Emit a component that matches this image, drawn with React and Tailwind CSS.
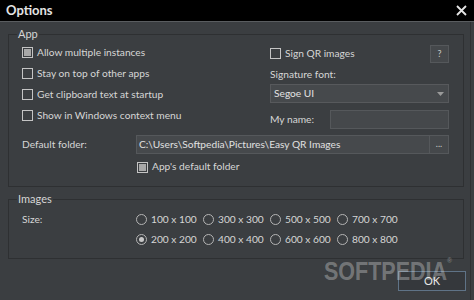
import React from "react";

function Check({ checked, label, className = "" }) {
  return (
    <div className={"flex items-center gap-[4px] whitespace-nowrap " + className}>
      <div className="w-[11px] h-[11px] border border-[#c4c4c4] flex items-center justify-center shrink-0">
        {checked && <div className="w-[7px] h-[7px] bg-[#a8a8a8]" />}
      </div>
      <span>{label}</span>
    </div>
  );
}

function Radio({ checked, label }) {
  return (
    <div className="flex items-center gap-[4px] w-[67px] whitespace-nowrap">
      <div className="w-[11px] h-[11px] rounded-full border border-[#b4b4b4] flex items-center justify-center shrink-0">
        {checked && <div className="w-[5px] h-[5px] rounded-full bg-[#c8c8c8]" />}
      </div>
      <span>{label}</span>
    </div>
  );
}

export default function App() {
  return (
    <div
      className="w-[474px] h-[300px] bg-[#3b3e41] flex flex-col text-[10.2px] text-[#d6d6d6] relative overflow-hidden"
      style={{ fontFamily: 'Lato, "Noto Sans", sans-serif' }}
    >
      <div className="h-[21px] bg-black flex items-center justify-between pl-[6px] pr-[6px] shrink-0">
        <span className="text-[13px] font-bold text-[#e4e4e4] leading-none">Options</span>
        <svg width="11" height="11" viewBox="0 0 11 11" className="mr-[1px]">
          <path d="M1 1 L10 10 M10 1 L1 10" stroke="#e6e6e6" strokeWidth="1.8" />
        </svg>
      </div>
      <div className="h-[1px] bg-[#5a5d60] shrink-0" />
      <div className="flex-1 flex flex-col pl-[8px] pr-[3px] relative">
        <div className="w-[1px] bg-[#2f3133] absolute right-[3px] top-0 bottom-0" />
        <fieldset className="mt-[5px] w-[456px] h-[160px] border border-[#2e3032] pl-[13px] pr-[14px] pt-0 pb-0 flex flex-col">
          <legend className="px-[1px] ml-[-5px] text-[11px] leading-[14px]">App</legend>
          <div className="flex">
            <div className="w-[248px] flex flex-col pt-[1px]">
              <Check checked label="Allow multiple instances" className="h-[21px]" />
              <Check label="Stay on top of other apps" className="h-[21px]" />
              <Check label="Get clipboard text at startup" className="h-[21px]" />
              <Check label="Show in Windows context menu" className="h-[21px]" />
            </div>
            <div className="w-[179px] flex flex-col pt-[3px]">
              <div className="h-[19px] flex items-center justify-between">
                <Check label="Sign QR images" />
                <div className="w-[19px] h-[18px] bg-[#45484b] border border-[#55585b] flex items-center justify-center text-[9px] text-[#c8c8c8]">?</div>
              </div>
              <div className="h-[21px] flex items-center pt-[3px]">Signature font:</div>
              <div className="h-[19px] bg-[#46494c] border border-[#57595c] flex items-center justify-between pl-[3px] pr-[4px]">
                <span className="text-[#e2e2e2]">Segoe UI</span>
                <svg width="7" height="4" viewBox="0 0 7 4">
                  <path d="M0 0 L7 0 L3.5 4 Z" fill="#9a9a9a" />
                </svg>
              </div>
              <div className="h-[19px] mt-[7px] flex items-center">
                <span className="w-[60px] whitespace-nowrap">My name:</span>
                <div className="flex-1 h-[19px] bg-[#45484b] border border-[#55585b]" />
              </div>
            </div>
          </div>
          <div className="flex items-center mt-[6px] h-[19px]">
            <span className="w-[114px]">Default folder:</span>
            <div className="flex-1 h-[19px] bg-[#46494c] border border-[#55585b] flex items-center pl-[2px] text-[#e0e0e0] whitespace-nowrap">
              C:\Users\Softpedia\Pictures\Easy QR Images
            </div>
            <div className="w-[19px] h-[19px] bg-[#45484b] border border-[#55585b] border-l-0 flex items-end justify-center pb-[5px] text-[9px] leading-none text-[#c8c8c8]">...</div>
          </div>
          <Check checked label="App's default folder" className="ml-[115px] mt-[6px] h-[14px]" />
        </fieldset>
        <fieldset className="mt-[5px] w-[456px] h-[67px] border border-[#2e3032] pl-[13px] pr-[14px] pt-0 pb-0 flex flex-col">
          <legend className="px-[1px] ml-[-5px] text-[11px] leading-[14px]">Images</legend>
          <div className="flex pt-[4px]">
            <span className="w-[114px] h-[20px] flex items-center">Size:</span>
            <div className="flex flex-col">
              <div className="flex h-[20px] items-center">
                <Radio label="100 x 100" />
                <Radio label="300 x 300" />
                <Radio label="500 x 500" />
                <Radio label="700 x 700" />
              </div>
              <div className="flex h-[20px] items-center">
                <Radio checked label="200 x 200" />
                <Radio label="400 x 400" />
                <Radio label="600 x 600" />
                <Radio label="800 x 800" />
              </div>
            </div>
          </div>
        </fieldset>
        <div className="flex justify-end mt-[12px] pr-[5px]">
          <div className="w-[68px] h-[20px] border border-[#5f7387] bg-[#35383c] flex items-center justify-center text-[11px] text-[#e6e6e6]">OK</div>
        </div>
      </div>
      <div
        className="absolute left-[324px] top-[259px] text-[25px] font-bold leading-none text-white/30 pointer-events-none whitespace-nowrap origin-left scale-x-[0.86]"
        style={{ fontFamily: '"Liberation Sans", Arial, sans-serif' }}
      >
        SOFTPEDIA<span className="text-[8px] align-top relative top-[-2px]">®</span>
      </div>
    </div>
  );
}
